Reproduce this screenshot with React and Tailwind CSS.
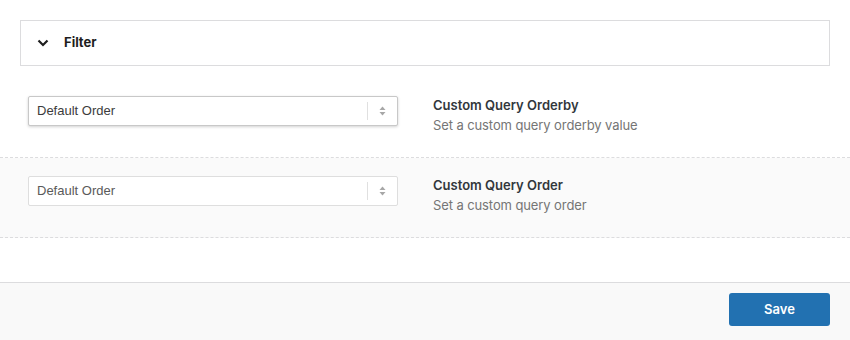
import React from "react";

const SelectBox = ({ focused }) => {
  return (
    <div
      className={
        "flex items-center w-[370px] h-[30px] bg-white border rounded-[2px] " +
        (focused
          ? "border-[#c8c8c8] shadow-[0_1px_3px_rgba(0,0,0,0.18)]"
          : "border-[#dedede]")
      }
    >
      <span
        className={
          "flex-1 pl-[8px] text-[13px] font-['Liberation_Sans',Arial,sans-serif] " +
          (focused ? "text-[#3c3c3c]" : "text-[#5a5a5a]")
        }
      >
        Default Order
      </span>
      <span className="w-px h-[18px] bg-[#e0e0e0]" />
      <span className="w-[29px] flex justify-center">
        <svg width="7" height="10" viewBox="0 0 7 10">
          <path d="M3.5 0.5 L6.5 4 L0.5 4 Z" fill="#a7a7a7" />
          <path d="M0.5 6 L6.5 6 L3.5 9.5 Z" fill="#a7a7a7" />
        </svg>
      </span>
    </div>
  );
};

const Row = ({ title, desc, focused, shaded }) => {
  return (
    <div
      className={
        "flex items-start h-[80px] pl-[28px] pt-[18px] border-b border-dashed border-[#dcdcde] " +
        (shaded ? "bg-[#fafafa]" : "bg-white")
      }
    >
      <SelectBox focused={focused} />
      <div className="ml-[35px] -mt-[1px]">
        <div className="text-[13px] leading-[20px] font-semibold text-[#32373c]">
          {title}
        </div>
        <div className="text-[13px] leading-[20px] text-[#757575] tracking-[-0.1px]">
          {desc}
        </div>
      </div>
    </div>
  );
};

const App = () => {
  return (
    <div className="w-[850px] h-[340px] bg-white flex flex-col font-['Inter',sans-serif] overflow-hidden">
      <div className="px-[20px] pt-[20px]">
        <div className="h-[46px] border border-[#dcdcde] flex items-center pl-[16px]">
          <svg width="12" height="8" viewBox="0 0 12 8" className="mr-[15px]">
            <path
              d="M1.5 1.5 L6 6 L10.5 1.5"
              fill="none"
              stroke="#1e1e1e"
              strokeWidth="2.2"
            />
          </svg>
          <span className="text-[13px] font-bold text-[#1e1e1e]">Filter</span>
        </div>
      </div>
      <div className="mt-[12px]">
        <Row
          title="Custom Query Orderby"
          desc="Set a custom query orderby value"
          focused
        />
        <Row
          title="Custom Query Order"
          desc="Set a custom query order"
          shaded
        />
      </div>
      <div className="flex-1" />
      <div className="h-[58px] border-t border-[#dcdcde] bg-[#f9f9f9] flex justify-end items-start pt-[10px] pr-[20px]">
        <button className="w-[101px] h-[33px] bg-[#2271b1] rounded-[3px] text-white text-[13px] font-semibold">
          Save
        </button>
      </div>
    </div>
  );
};

export default App;
